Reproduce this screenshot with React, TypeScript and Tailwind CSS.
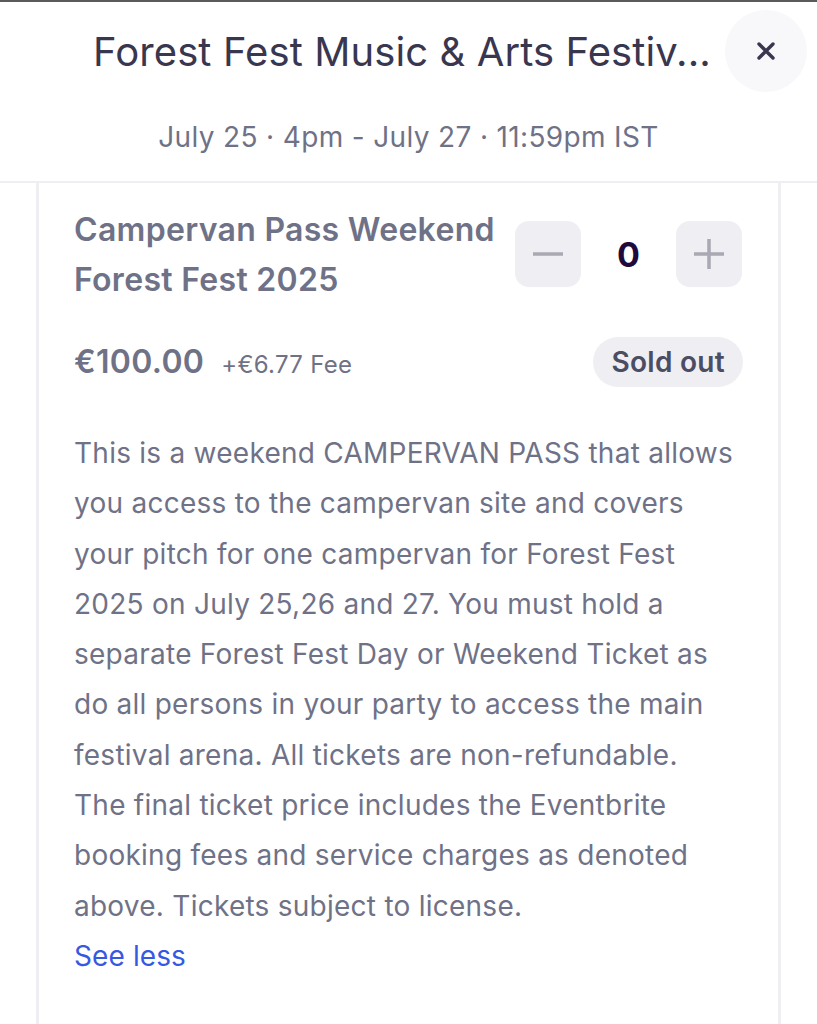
import React from "react";

const description =
  "This is a weekend CAMPERVAN PASS that allows you access to the campervan site and covers your pitch for one campervan for Forest Fest 2025 on July 25,26 and 27. You must hold a separate Forest Fest Day or Weekend Ticket as do all persons in your party to access the main festival arena. All tickets are non-refundable. The final ticket price includes the Eventbrite booking fees and service charges as denoted above. Tickets subject to license.";

const App = () => {
  return (
    <div className="w-[817px] h-[1024px] overflow-hidden bg-white font-['Inter',sans-serif]">
      <div className="h-[2px] bg-[#5a5a5a]" />
      <header className="relative border-b-2 border-[#efeef3] h-[181px]">
        <h1 className="pt-[24px] pl-[93px] text-[40px] leading-[52px] text-[#39364f] tracking-[0.1px] whitespace-nowrap">
          Forest Fest Music &amp; Arts Festiv...
        </h1>
        <p className="mt-[41px] text-center text-[28px] leading-[36px] text-[#6f7287] tracking-[0.35px]">
          July 25 · 4pm - July 27 · 11:59pm IST
        </p>
        <button className="absolute right-[10px] top-[8px] w-[82px] h-[82px] rounded-full bg-[#f8f7fa] flex items-center justify-center text-[#39364f]">
          <svg width="22" height="22" viewBox="0 0 22 22" fill="none" stroke="currentColor" strokeWidth="3.4" strokeLinecap="round">
            <path d="M4 4l14 14M18 4L4 18" />
          </svg>
        </button>
      </header>

      <div className="mx-[36px] border-x-[3px] border-[#efeef3] h-full px-[35px] pt-[22px]">
        <div className="flex items-start justify-between">
          <h2 className="text-[32px] leading-[50px] font-semibold text-[#6f7287] w-[430px] tracking-[0.3px]">
            Campervan Pass Weekend Forest Fest 2025
          </h2>
          <div className="flex items-center mt-[16px] mr-[1px]">
            <button className="w-[66px] h-[66px] rounded-[14px] bg-[#efeef3] flex items-center justify-center text-[#a9a8b3]">
              <svg width="34" height="34" viewBox="0 0 34 34" stroke="currentColor" strokeWidth="3.5">
                <path d="M2 17h30" />
              </svg>
            </button>
            <span className="w-[95px] text-center text-[34px] font-bold text-[#1e0a3c]">0</span>
            <button className="w-[66px] h-[66px] rounded-[14px] bg-[#efeef3] flex items-center justify-center text-[#a9a8b3]">
              <svg width="34" height="34" viewBox="0 0 34 34" stroke="currentColor" strokeWidth="3.5">
                <path d="M2 17h30M17 2v30" />
              </svg>
            </button>
          </div>
        </div>

        <div className="flex items-center justify-between mt-[32px]">
          <div className="flex items-baseline gap-[17px]">
            <span className="text-[32px] font-semibold text-[#6f7287] tracking-[0.3px]">€100.00</span>
            <span className="text-[24px] text-[#6f7287] tracking-[0.3px]">+€6.77 Fee</span>
          </div>
          <span className="h-[50px] px-[18px] rounded-full bg-[#efeef3] flex items-center text-[28px] font-semibold text-[#4b4d63] tracking-[0.3px]">
            Sold out
          </span>
        </div>

        <p className="mt-[41px] w-[661px] text-[28px] leading-[50.3px] text-[#6f7287] tracking-[0.25px]">
          {description}
        </p>
        <a className="block text-[28px] leading-[50px] text-[#3659e3] tracking-[0.1px]">See less</a>
      </div>
    </div>
  );
};

export default App;
